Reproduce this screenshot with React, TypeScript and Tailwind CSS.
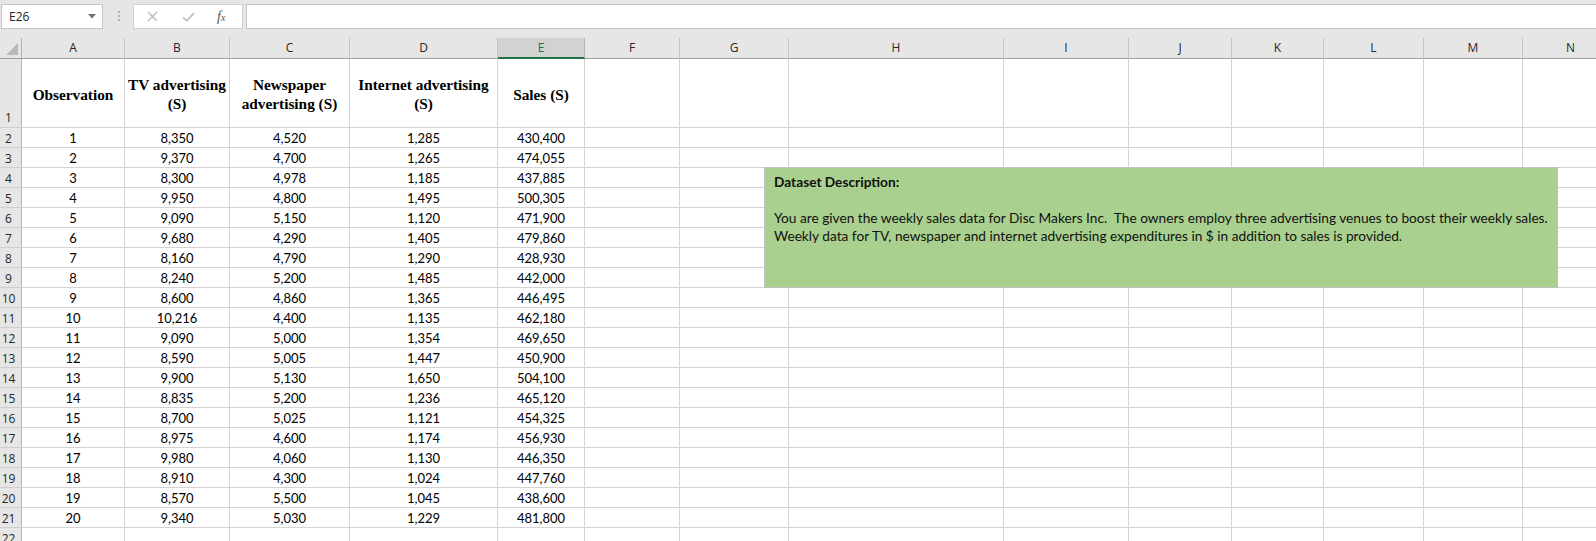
import React from 'react';

// Excel-like sheet: column widths include the 1px gridline on the right
const COLS =
    'grid grid-cols-[22px_103px_105px_120px_148px_87px_95px_109px_215px_125px_103px_92px_100px_99px_96px]';

const LETTERS = ['A', 'B', 'C', 'D', 'E', 'F', 'G', 'H', 'I', 'J', 'K', 'L', 'M', 'N'];

const DATA: string[][] = [
    ['1', '8,350', '4,520', '1,285', '430,400'],
    ['2', '9,370', '4,700', '1,265', '474,055'],
    ['3', '8,300', '4,978', '1,185', '437,885'],
    ['4', '9,950', '4,800', '1,495', '500,305'],
    ['5', '9,090', '5,150', '1,120', '471,900'],
    ['6', '9,680', '4,290', '1,405', '479,860'],
    ['7', '8,160', '4,790', '1,290', '428,930'],
    ['8', '8,240', '5,200', '1,485', '442,000'],
    ['9', '8,600', '4,860', '1,365', '446,495'],
    ['10', '10,216', '4,400', '1,135', '462,180'],
    ['11', '9,090', '5,000', '1,354', '469,650'],
    ['12', '8,590', '5,005', '1,447', '450,900'],
    ['13', '9,900', '5,130', '1,650', '504,100'],
    ['14', '8,835', '5,200', '1,236', '465,120'],
    ['15', '8,700', '5,025', '1,121', '454,325'],
    ['16', '8,975', '4,600', '1,174', '456,930'],
    ['17', '9,980', '4,060', '1,130', '446,350'],
    ['18', '8,910', '4,300', '1,024', '447,760'],
    ['19', '8,570', '5,500', '1,045', '438,600'],
    ['20', '9,340', '5,030', '1,229', '481,800'],
];

const HEADERS = [
    ['Observation'],
    ['TV advertising', '(S)'],
    ['Newspaper', 'advertising (S)'],
    ['Internet advertising', '(S)'],
    ['Sales (S)'],
];

const Toolbar: React.FC = () => (
    <div className="flex h-[38px] items-start bg-[#e6e6e6] pt-[4px] font-['Open_Sans',sans-serif]">
        <div className="ml-[1px] flex h-[25px] w-[102px] items-center justify-between border border-[#c6c6c6] bg-white pl-[7px] pr-[6px] text-[12px] text-[#222]">
            <span>E26</span>
            <svg width="8" height="5" viewBox="0 0 8 5">
                <path d="M0 0H8L4 4.5Z" fill="#6f6f6f" />
            </svg>
        </div>
        <div className="ml-[15px] mt-[7px] flex w-[2px] flex-col gap-[2px]">
            <span className="h-[2px] w-[2px] bg-[#b0b0b0]" />
            <span className="h-[2px] w-[2px] bg-[#b0b0b0]" />
            <span className="h-[2px] w-[2px] bg-[#b0b0b0]" />
        </div>
        <div className="ml-[13px] flex h-[25px] w-[110px] items-center border border-[#d0d0d0] bg-white">
            <svg width="11" height="11" viewBox="0 0 11 11" className="ml-[13px]">
                <path d="M1 1L10 10M10 1L1 10" stroke="#b5b5b5" strokeWidth="1.2" />
            </svg>
            <svg width="13" height="10" viewBox="0 0 13 10" className="ml-[24px]">
                <path d="M1 5.2L4.8 8.8L12 1" stroke="#b5b5b5" strokeWidth="1.5" fill="none" />
            </svg>
            <span className="ml-[22px] font-['Liberation_Serif',serif] text-[14px] italic leading-none text-[#555]">
                f<span className="text-[10px]">x</span>
            </span>
        </div>
        <div className="ml-[3px] h-[25px] flex-1 border border-r-0 border-[#c6c6c6] bg-white" />
    </div>
);

const ColumnHeaders: React.FC = () => (
    <div className={`${COLS} h-[21px] font-['Open_Sans',sans-serif] text-[12px] text-[#262626]`}>
        <div className="relative border-b border-r border-b-[#9e9e9e] border-r-[#b6b6b6] bg-[#e6e6e6]">
            <svg width="22" height="20" viewBox="0 0 22 20" className="absolute left-0 top-0">
                <path d="M18 5V17H6Z" fill="#b9b9b9" />
            </svg>
        </div>
        {LETTERS.map(l =>
            l === 'E' ? (
                <div
                    key={l}
                    className="flex items-center justify-center border-b-2 border-r border-b-[#217346] border-r-[#b6b6b6] bg-[#d2d2d2] pt-[1px] text-[#217346]"
                >
                    {l}
                </div>
            ) : (
                <div
                    key={l}
                    className="flex items-center justify-center border-b border-r border-b-[#9e9e9e] border-r-[#c4c4c4] bg-[#e6e6e6]"
                >
                    {l}
                </div>
            )
        )}
    </div>
);

const RowHead: React.FC<{ n: number }> = ({ n }) => (
    <div className="flex items-end justify-center border-b border-r border-b-[#cfcfcf] border-r-[#b6b6b6] bg-[#e6e6e6] pr-[4px] font-['Open_Sans',sans-serif] text-[12px] leading-[16px] text-[#262626]">
        {n}
    </div>
);

const Cell: React.FC<{ children?: React.ReactNode }> = ({ children }) => (
    <div className="flex items-end justify-center border-b border-r border-[#d4d4d4] pb-[1px] font-['Lato',sans-serif] text-[13px] leading-[16px] text-black">
        {children}
    </div>
);

const TitleRow: React.FC = () => (
    <div className={`${COLS} h-[69px]`}>
        <div className="flex items-end justify-center border-b border-r border-b-[#cfcfcf] border-r-[#b6b6b6] bg-[#e6e6e6] pb-[1px] pr-[4px] font-['Open_Sans',sans-serif] text-[12px] leading-[16px] text-[#262626]">
            1
        </div>
        {HEADERS.map((lines, i) => (
            <div
                key={i}
                className="flex flex-col items-center justify-center border-b border-r border-[#d4d4d4] pt-[2px] text-center font-['Liberation_Serif',serif] text-[15.3px] font-bold leading-[19px] text-black"
            >
                {lines.map(t => (
                    <span key={t} className="whitespace-nowrap">
                        {t}
                    </span>
                ))}
            </div>
        ))}
        {Array.from({ length: 9 }).map((_, i) => (
            <Cell key={i} />
        ))}
    </div>
);

const DescriptionBox: React.FC = () => (
    <div className="absolute left-[764px] top-[167px] h-[121px] w-[794px] border border-[#c3c3c3] bg-[#a9d08e] pl-[9px] pt-[5px] font-['Lato',sans-serif] text-[13.7px] leading-[18px] text-[#111]">
        <p className="font-bold">Dataset Description:</p>
        <p>&nbsp;</p>
        <p className="whitespace-pre">
            You are given the weekly sales data for Disc Makers Inc.  The owners employ three advertising venues to boost their weekly sales.
        </p>
        <p>Weekly data for TV, newspaper and internet advertising expenditures in $ in addition to sales is provided.</p>
    </div>
);

export default function App() {
    return (
        <div className="relative h-[541px] w-[1596px] overflow-hidden bg-white">
            <Toolbar />
            <ColumnHeaders />
            <TitleRow />
            {DATA.map((row, r) => (
                <div key={r} className={`${COLS} h-[20px]`}>
                    <RowHead n={r + 2} />
                    {row.map((v, c) => (
                        <Cell key={c}>{v}</Cell>
                    ))}
                    {Array.from({ length: 9 }).map((_, i) => (
                        <Cell key={`e${i}`} />
                    ))}
                </div>
            ))}
            <div className={`${COLS} h-[20px]`}>
                <RowHead n={22} />
                {Array.from({ length: 14 }).map((_, i) => (
                    <Cell key={i} />
                ))}
            </div>
            <DescriptionBox />
        </div>
    );
}
